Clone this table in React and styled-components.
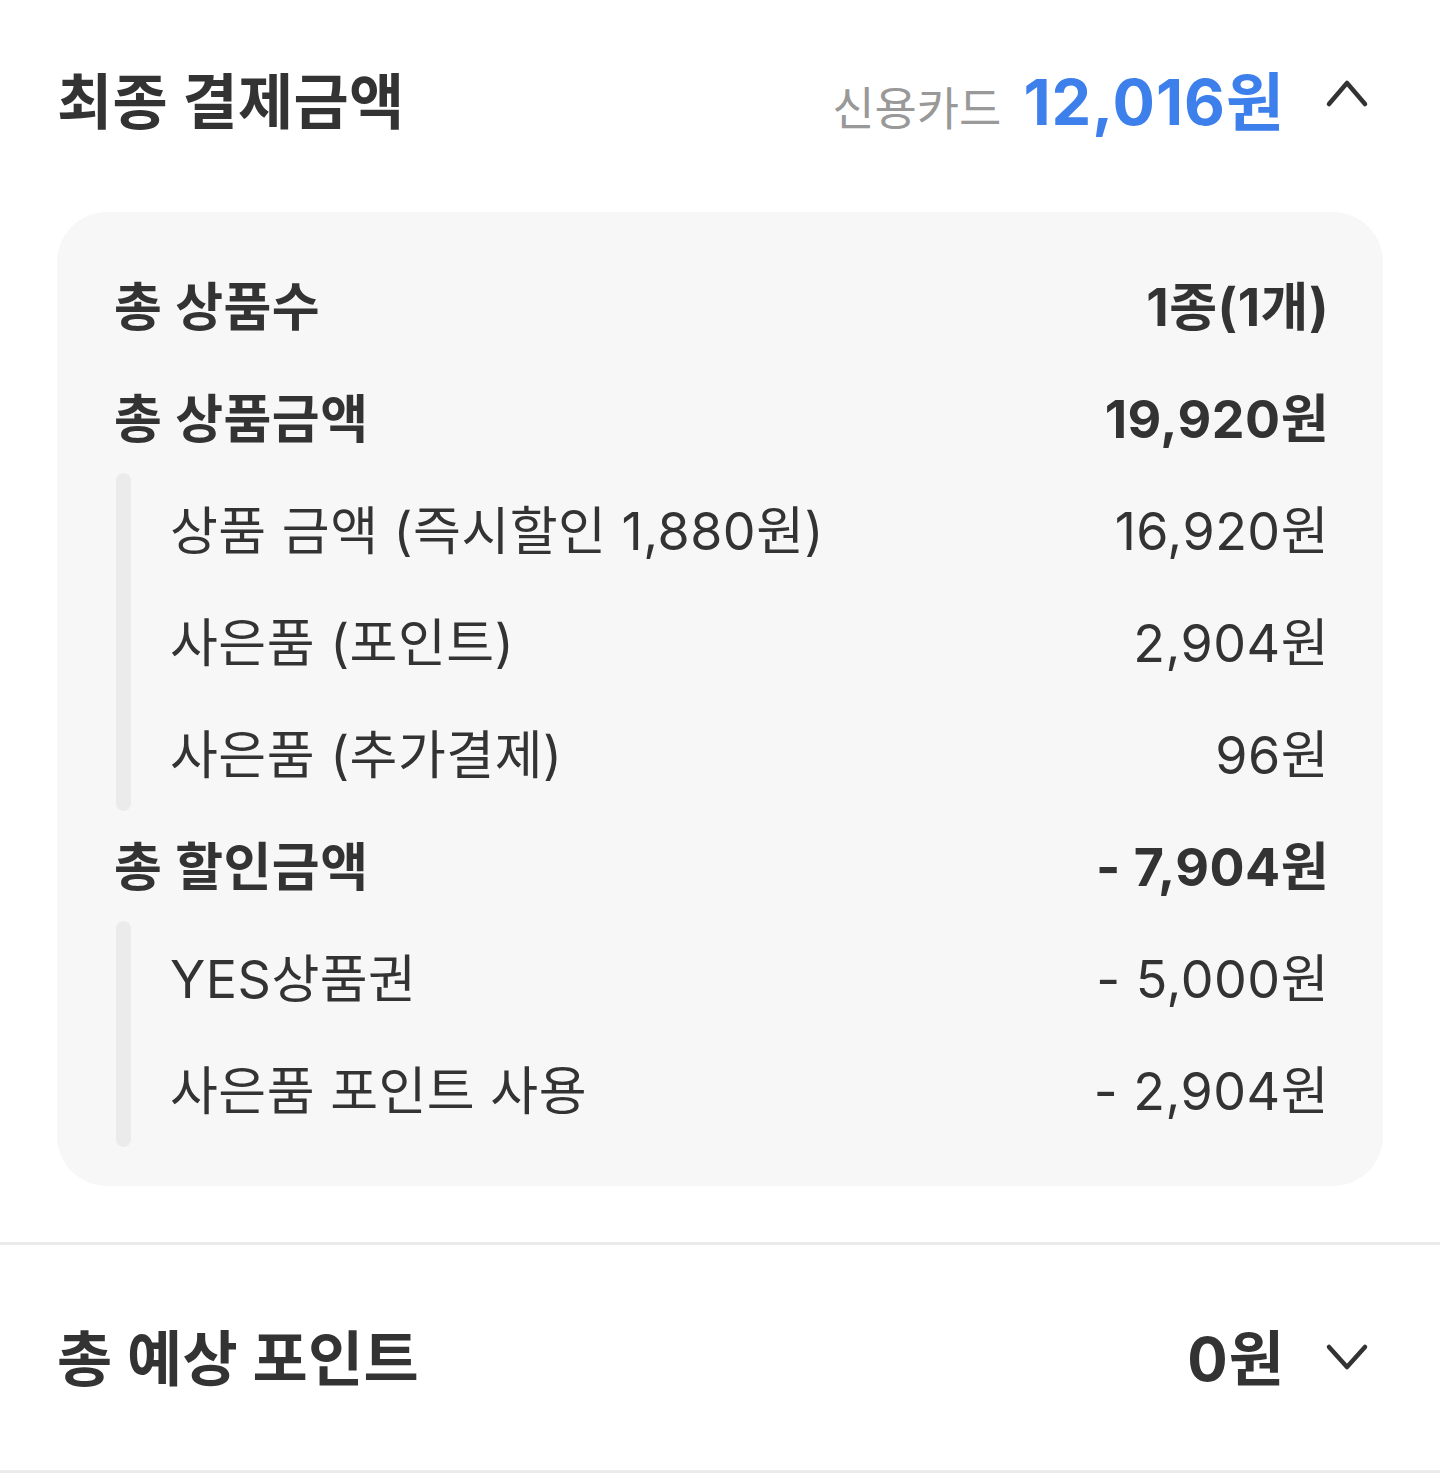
import React from "react";
import styled, { createGlobalStyle } from "styled-components";

const GlobalStyle = createGlobalStyle`
  html, body {
    margin: 0;
    padding: 0;
    background: #fff;
  }
  body {
    font-family: Inter, "Noto Sans CJK KR", "Noto Sans", sans-serif;
    color: #333;
  }
`;

const Page = styled.div`
  width: 1440px;
  min-height: 1473px;
  background: #fff;
`;

const Section = styled.section`
  padding: 0 57px;
  border-bottom: ${props => (props.divided ? "3px solid #ebebeb" : "none")};
`;

const Header = styled.div`
  display: flex;
  align-items: center;
  justify-content: space-between;
  height: ${props => props.height}px;
  padding-bottom: 6px;
  box-sizing: border-box;
`;

const Title = styled.h2`
  margin: 0;
  font-size: 60px;
  font-weight: 700;
  color: #333;
  letter-spacing: 0.3px;
`;

const Summary = styled.div`
  display: flex;
  align-items: center;
  gap: 38px;
`;

const Amount = styled.div`
  display: flex;
  align-items: baseline;
  gap: 22px;
`;

const Method = styled.span`
  font-size: 46px;
  color: #999;
`;

const Total = styled.span`
  font-size: ${props => props.size || 60}px;
  font-weight: 700;
  color: ${props => props.color || "#333"};
  letter-spacing: 1px;
`;

const Chevron = styled.svg`
  display: block;
  width: 60px;
  height: 48px;
`;

const Card = styled.div`
  margin-top: 12px;
  margin-bottom: 56px;
  background: #f7f7f7;
  border-radius: 50px;
  padding: 37px 54px 41px 57px;
`;

const Row = styled.div`
  display: flex;
  align-items: center;
  justify-content: space-between;
  height: 112px;
  padding-bottom: 4px;
  box-sizing: border-box;
  font-size: 52px;
  font-weight: ${props => (props.strong ? 700 : 400)};
  color: #333;
  letter-spacing: 0.5px;
`;

const SubGroup = styled.div`
  display: flex;
  gap: 39px;
  margin-left: 2px;
`;

const Bar = styled.div`
  width: 15px;
  flex: none;
  margin-bottom: -2px;
  border-radius: 8px;
  background: #ebebeb;
`;

const SubRows = styled.div`
  flex: 1;
  display: flex;
  flex-direction: column;
`;

const ChevronIcon = ({ up }) => (
  <Chevron viewBox="0 0 60 48">
    <path
      d={up ? "M6 31 L24 10 L42 31" : "M6 16 L24 36 L42 16"}
      fill="none"
      stroke="#333"
      strokeWidth="4.5"
      strokeLinecap="round"
      strokeLinejoin="round"
    />
  </Chevron>
);

const groups = [
  { label: "총 상품수", value: "1종(1개)" },
  {
    label: "총 상품금액",
    value: "19,920원",
    items: [
      { label: "상품 금액 (즉시할인 1,880원)", value: "16,920원" },
      { label: "사은품 (포인트)", value: "2,904원" },
      { label: "사은품 (추가결제)", value: "96원" }
    ]
  },
  {
    label: "총 할인금액",
    value: "- 7,904원",
    items: [
      { label: "YES상품권", value: "- 5,000원" },
      { label: "사은품 포인트 사용", value: "- 2,904원" }
    ]
  }
];

export default function App() {
  return (
    <Page>
      <GlobalStyle />
      <Section divided>
        <Header height={200}>
          <Title>최종 결제금액</Title>
          <Summary>
            <Amount>
              <Method>신용카드</Method>
              <Total size={63} color="#3d80ec">12,016원</Total>
            </Amount>
            <ChevronIcon up />
          </Summary>
        </Header>
        <Card>
          {groups.map(group => (
            <React.Fragment key={group.label}>
              <Row strong>
                <span>{group.label}</span>
                <span>{group.value}</span>
              </Row>
              {group.items && (
                <SubGroup>
                  <Bar />
                  <SubRows>
                    {group.items.map(item => (
                      <Row key={item.label}>
                        <span>{item.label}</span>
                        <span>{item.value}</span>
                      </Row>
                    ))}
                  </SubRows>
                </SubGroup>
              )}
            </React.Fragment>
          ))}
        </Card>
      </Section>
      <Section divided>
        <Header height={225}>
          <Title>총 예상 포인트</Title>
          <Summary>
            <Total>0원</Total>
            <ChevronIcon />
          </Summary>
        </Header>
      </Section>
    </Page>
  );
}
